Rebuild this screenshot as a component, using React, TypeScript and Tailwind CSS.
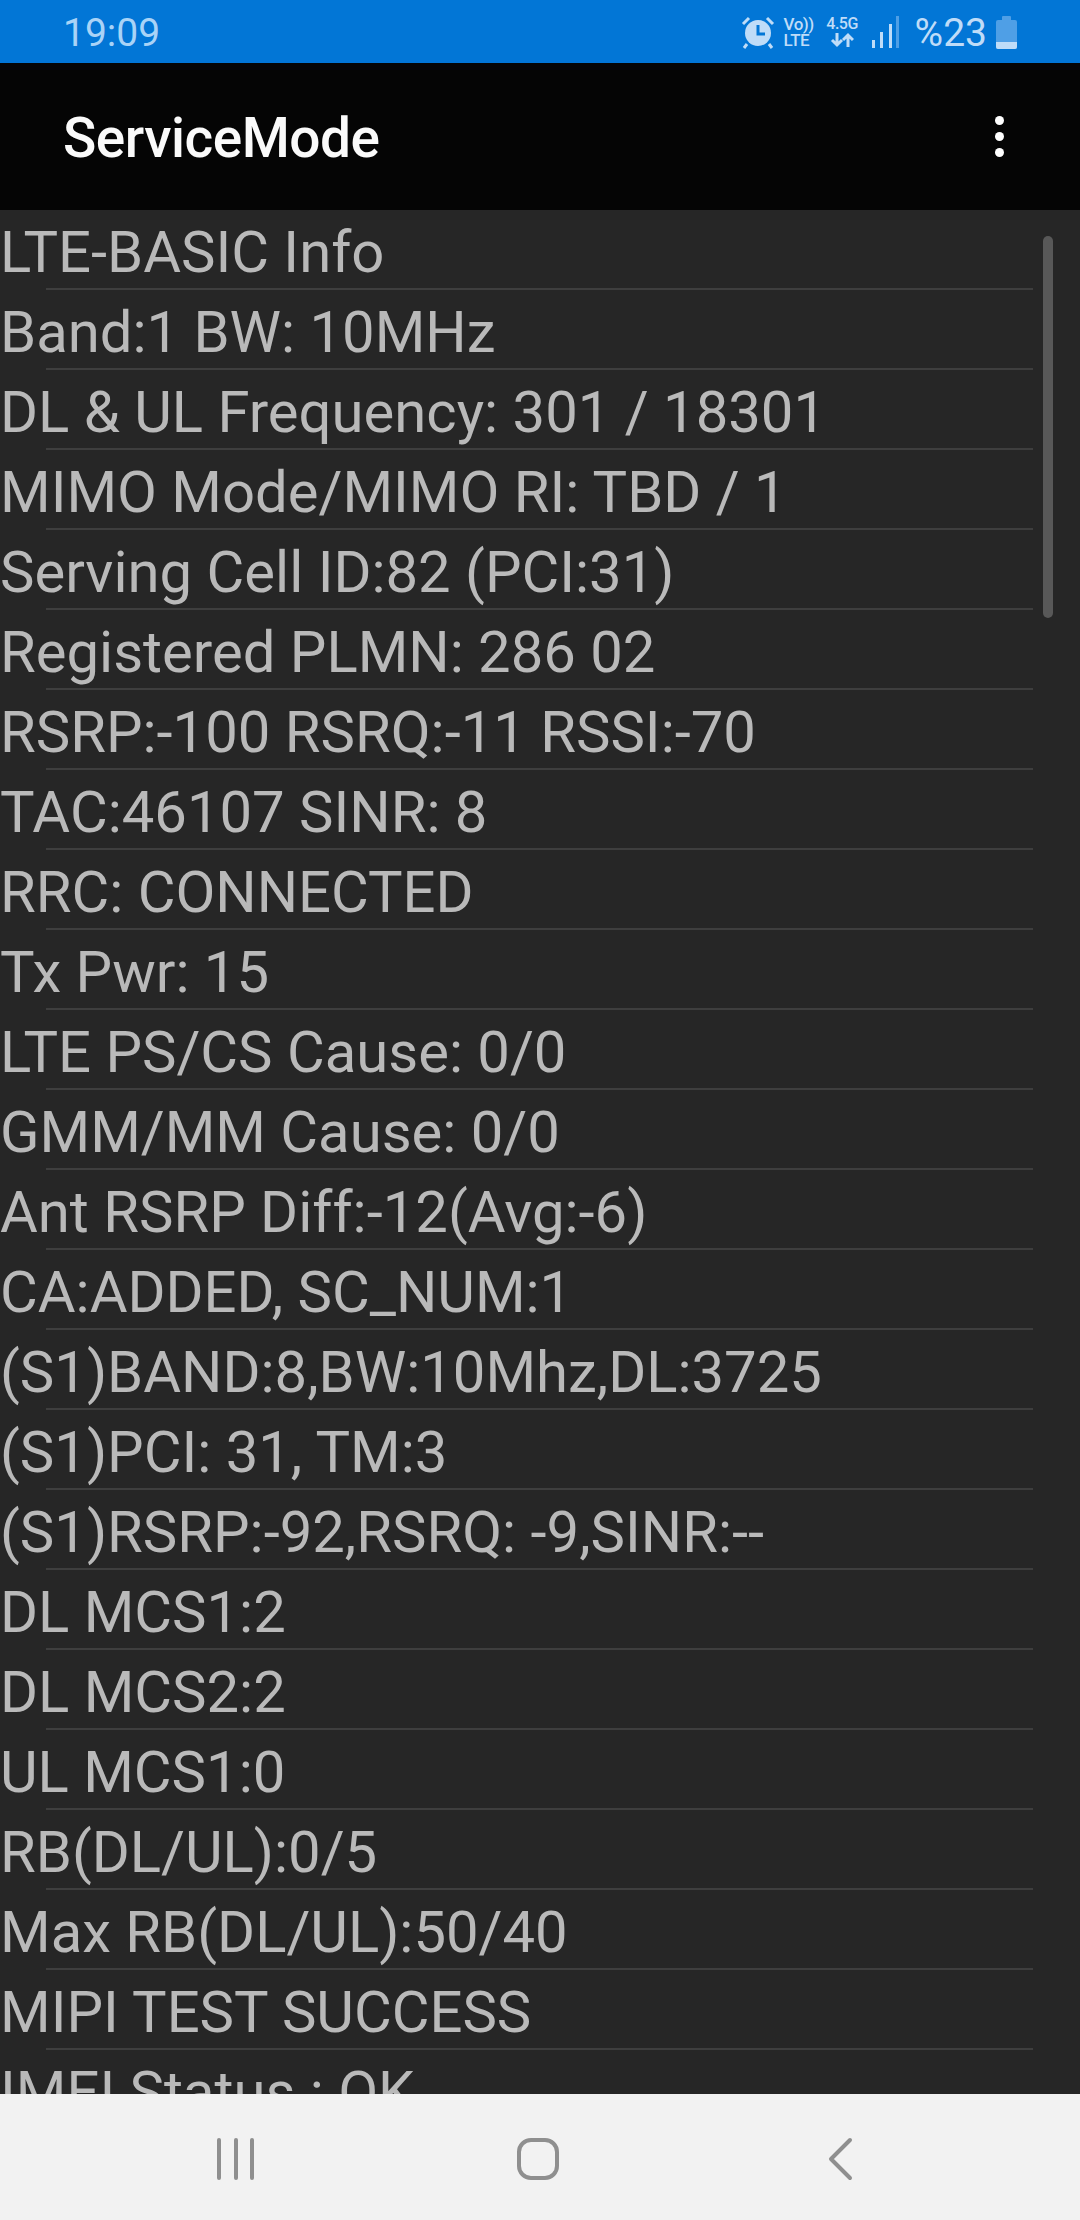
const rows = ["LTE-BASIC Info","Band:1 BW: 10MHz","DL & UL Frequency: 301 / 18301","MIMO Mode/MIMO RI: TBD / 1","Serving Cell ID:82 (PCI:31)","Registered PLMN: 286 02","RSRP:-100 RSRQ:-11 RSSI:-70","TAC:46107 SINR: 8","RRC: CONNECTED","Tx Pwr: 15","LTE PS/CS Cause: 0/0","GMM/MM Cause: 0/0","Ant RSRP Diff:-12(Avg:-6)","CA:ADDED, SC_NUM:1","(S1)BAND:8,BW:10Mhz,DL:3725","(S1)PCI: 31, TM:3","(S1)RSRP:-92,RSRQ: -9,SINR:--","DL MCS1:2","DL MCS2:2","UL MCS1:0","RB(DL/UL):0/5","Max RB(DL/UL):50/40","MIPI TEST SUCCESS","IMEI Status : OK"];

function StatusIcons() {
  return (
    <div className="flex items-center text-[#bfdcf8]">
      <svg width="34" height="34" viewBox="0 0 34 34" className="mr-[9px] shrink-0" fill="#bfdcf8">
        <circle cx="17" cy="18" r="13" />
        <path d="M17 10v9h7" fill="none" stroke="#0276d6" strokeWidth="3" />
        <path d="M2 9l6-6M32 9l-6-6M6 29l-3 4M28 29l3 4" stroke="#bfdcf8" strokeWidth="3" fill="none" />
      </svg>
      <div className="w-[32px] mr-[10px] text-[17px] leading-[16px] font-medium tracking-[-0.5px] whitespace-nowrap shrink-0">
        <div>Vo))</div><div>LTE</div>
      </div>
      <div className="w-[33px] mr-[13px] flex flex-col items-center shrink-0">
        <div className="text-[16px] leading-[16px] font-medium whitespace-nowrap tracking-[-0.5px]">4.5G</div>
        <svg width="24" height="16" viewBox="0 0 24 16" fill="none" stroke="#bfdcf8" strokeWidth="3">
          <path d="M7 1v12M2 8l5 5 5-5M18 15V3M13 8l5-5 5 5" />
        </svg>
      </div>
      <svg width="27" height="32" viewBox="0 0 27 32" className="mr-[16px] shrink-0">
        <rect x="0" y="24" width="3" height="8" fill="#bfdcf8" />
        <rect x="8" y="16" width="3" height="16" fill="#bfdcf8" />
        <rect x="17" y="8" width="3" height="24" fill="#bfdcf8" />
        <rect x="24" y="0" width="3" height="32" fill="#4f9fe6" />
      </svg>
      <span className="text-[39px] leading-[40px] mr-[9px] mt-[2px]">%23</span>
      <div className="w-[21px] h-[33px] flex flex-col items-center mt-[1px]">
        <div className="w-[9px] h-[4px] bg-[#4f9fe6] rounded-t-[1px]" />
        <div className="w-[21px] h-[29px] rounded-[2px] bg-[#4f9fe6] flex flex-col justify-end overflow-hidden">
          <div className="h-[7px] bg-[#bfdcf8]" />
        </div>
      </div>
    </div>
  );
}

export default function App() {
  return (
    <div className="w-[1080px] h-[2220px] flex flex-col overflow-hidden font-['Roboto',sans-serif] bg-[#262626]">
      <div className="h-[63px] shrink-0 bg-[#0276d6] flex items-center justify-between pl-[63px] pr-[63px]">
        <span className="text-[39px] leading-[40px] text-[#a9d3f7] mt-[2px]">19:09</span>
        <StatusIcons />
      </div>
      <div className="h-[147px] shrink-0 bg-[#050505] flex items-center justify-between pl-[63px] pr-[76px]">
        <span className="text-[55px] leading-[60px] font-medium text-[#fafafa] tracking-[-0.5px] mt-[3px]">ServiceMode</span>
        <div className="flex flex-col gap-[7px]">
          <div className="w-[9px] h-[9px] rounded-full bg-white" />
          <div className="w-[9px] h-[9px] rounded-full bg-white" />
          <div className="w-[9px] h-[9px] rounded-full bg-white" />
        </div>
      </div>
      <div className="relative flex-1 min-h-0 overflow-hidden">
        {rows.map((r) => (
          <div key={r} className="h-[80px] pr-[47px] flex flex-col">
            <div className="flex-1 flex items-center pt-[6px] text-[58px] leading-[64px] text-[#b9b9b9] whitespace-nowrap">{r}</div>
            <div className="h-[2px] ml-[46px] bg-[#3e3e3e]" />
          </div>
        ))}
        <div className="absolute left-[1043px] top-[26px] w-[10px] h-[382px] rounded-full bg-[#585858]" />
      </div>
      <div className="h-[126px] shrink-0 bg-[#f2f2f2] flex items-start">
        <div className="w-[1080px] flex pt-[43px]">
          <svg width="1080" height="46" viewBox="0 0 1080 46" fill="none" stroke="#8f8f8f" strokeLinecap="round">
            <path d="M219 3v38M236 3v38M252 3v38" strokeWidth="4" />
            <rect x="519" y="3" width="38" height="38" rx="12" strokeWidth="4" />
            <path d="M850 3l-19 19 19 19" strokeWidth="4" strokeLinejoin="round" />
          </svg>
        </div>
      </div>
    </div>
  );
}
